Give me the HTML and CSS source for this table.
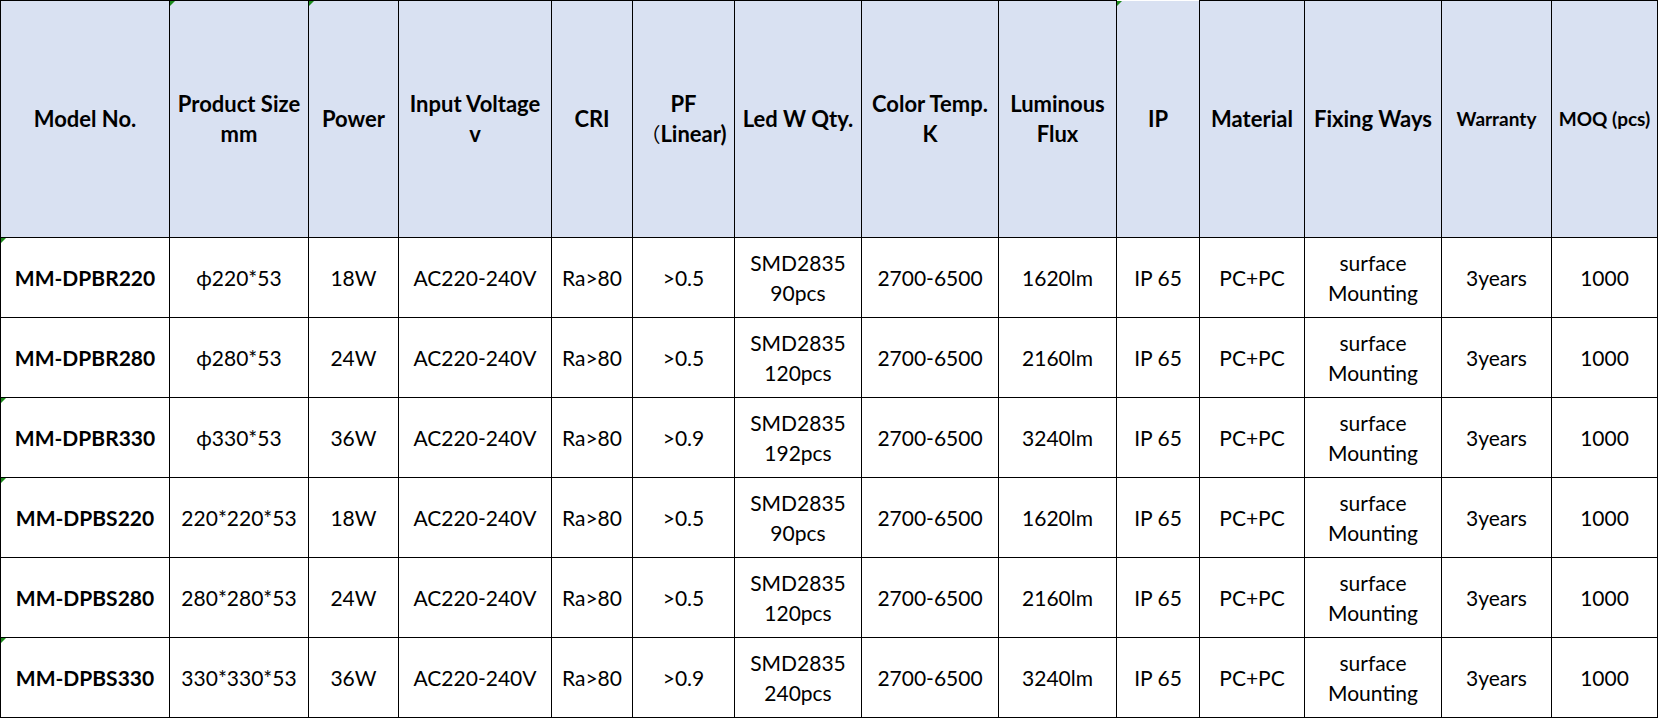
FILE: index.html
```html
<!DOCTYPE html>
<html lang="en">
<head>
<meta charset="utf-8">
<title>Product Specification</title>
<link rel="stylesheet" href="styles.css">
</head>
<body>
<table class="spec">
  <colgroup>
    <col class="c1"><col class="c2"><col class="c3"><col class="c4"><col class="c5"><col class="c6"><col class="c7">
    <col class="c8"><col class="c9"><col class="c10"><col class="c11"><col class="c12"><col class="c13"><col class="c14">
  </colgroup>
  <thead>
    <tr class="head-row">
      <th>Model No.</th>
      <th class="mark">Product Size<br>mm</th>
      <th class="mark">Power</th>
      <th>Input Voltage<br>v</th>
      <th>CRI</th>
      <th>PF<br><span class="cjk">（</span>Linear)</th>
      <th>Led W Qty.</th>
      <th>Color Temp.<br>K</th>
      <th>Luminous<br>Flux</th>
      <th class="mark open-top">IP</th>
      <th>Material</th>
      <th>Fixing Ways</th>
      <th class="small">Warranty</th>
      <th class="small">MOQ (pcs)</th>
    </tr>
  </thead>
  <tbody>
    <tr>
      <td class="model mark">MM-DPBR220</td><td>ϕ220*53</td><td>18W</td><td>AC220-240V</td><td>Ra&gt;80</td><td>&gt;0.5</td>
      <td>SMD2835<br>90pcs</td><td>2700-6500</td><td>1620lm</td><td>IP 65</td><td>PC+PC</td><td>surface<br>Mounting</td><td>3years</td><td>1000</td>
    </tr>
    <tr>
      <td class="model">MM-DPBR280</td><td>ϕ280*53</td><td>24W</td><td>AC220-240V</td><td>Ra&gt;80</td><td>&gt;0.5</td>
      <td>SMD2835<br>120pcs</td><td>2700-6500</td><td>2160lm</td><td>IP 65</td><td>PC+PC</td><td>surface<br>Mounting</td><td>3years</td><td>1000</td>
    </tr>
    <tr>
      <td class="model mark">MM-DPBR330</td><td>ϕ330*53</td><td>36W</td><td>AC220-240V</td><td>Ra&gt;80</td><td>&gt;0.9</td>
      <td>SMD2835<br>192pcs</td><td>2700-6500</td><td>3240lm</td><td>IP 65</td><td>PC+PC</td><td>surface<br>Mounting</td><td>3years</td><td>1000</td>
    </tr>
    <tr>
      <td class="model mark">MM-DPBS220</td><td>220*220*53</td><td>18W</td><td>AC220-240V</td><td>Ra&gt;80</td><td>&gt;0.5</td>
      <td>SMD2835<br>90pcs</td><td>2700-6500</td><td>1620lm</td><td>IP 65</td><td>PC+PC</td><td>surface<br>Mounting</td><td>3years</td><td>1000</td>
    </tr>
    <tr>
      <td class="model">MM-DPBS280</td><td>280*280*53</td><td>24W</td><td>AC220-240V</td><td>Ra&gt;80</td><td>&gt;0.5</td>
      <td>SMD2835<br>120pcs</td><td>2700-6500</td><td>2160lm</td><td>IP 65</td><td>PC+PC</td><td>surface<br>Mounting</td><td>3years</td><td>1000</td>
    </tr>
    <tr>
      <td class="model mark">MM-DPBS330</td><td>330*330*53</td><td>36W</td><td>AC220-240V</td><td>Ra&gt;80</td><td>&gt;0.9</td>
      <td>SMD2835<br>240pcs</td><td>2700-6500</td><td>3240lm</td><td>IP 65</td><td>PC+PC</td><td>surface<br>Mounting</td><td>3years</td><td>1000</td>
    </tr>
  </tbody>
</table>
</body>
</html>
```

FILE: styles.css
```css
html, body {
  margin: 0;
  padding: 0;
  background: #ffffff;
}

.spec {
  border-collapse: collapse;
  table-layout: fixed;
  width: 1658px;
  font-family: Lato, "Noto Sans", "Noto Sans CJK SC", sans-serif;
  font-size: 21px;
  line-height: 30px;
  color: #000000;
}

.c1 { width: 169px; }
.c2 { width: 139px; }
.c3 { width: 90px; }
.c4 { width: 153px; }
.c5 { width: 81px; }
.c6 { width: 102px; }
.c7 { width: 127px; }
.c8 { width: 137px; }
.c9 { width: 118px; }
.c10 { width: 83px; }
.c11 { width: 105px; }
.c12 { width: 137px; }
.c13 { width: 110px; }
.c14 { width: 106px; }

.spec th,
.spec td {
  border: 1px solid #000000;
  padding: 0;
  text-align: center;
  vertical-align: middle;
  white-space: nowrap;
  position: relative;
}

.spec th {
  background: #d9e1f2;
  font-weight: 700;
  font-size: 22px;
}

.head-row {
  height: 237px;
}

.spec tbody tr {
  height: 80px;
}

.spec th.small {
  font-size: 19px;
}

.spec th.open-top {
  border-top-color: #ffffff;
}

.cjk {
  font-family: "Noto Sans CJK SC", sans-serif;
  font-weight: 400;
  font-size: 20px;
}

.spec td.model {
  font-weight: 700;
}

.mark::before {
  content: "";
  position: absolute;
  top: 0;
  left: 0;
  border-top: 5px solid #1a8a1a;
  border-right: 5px solid transparent;
}
```
